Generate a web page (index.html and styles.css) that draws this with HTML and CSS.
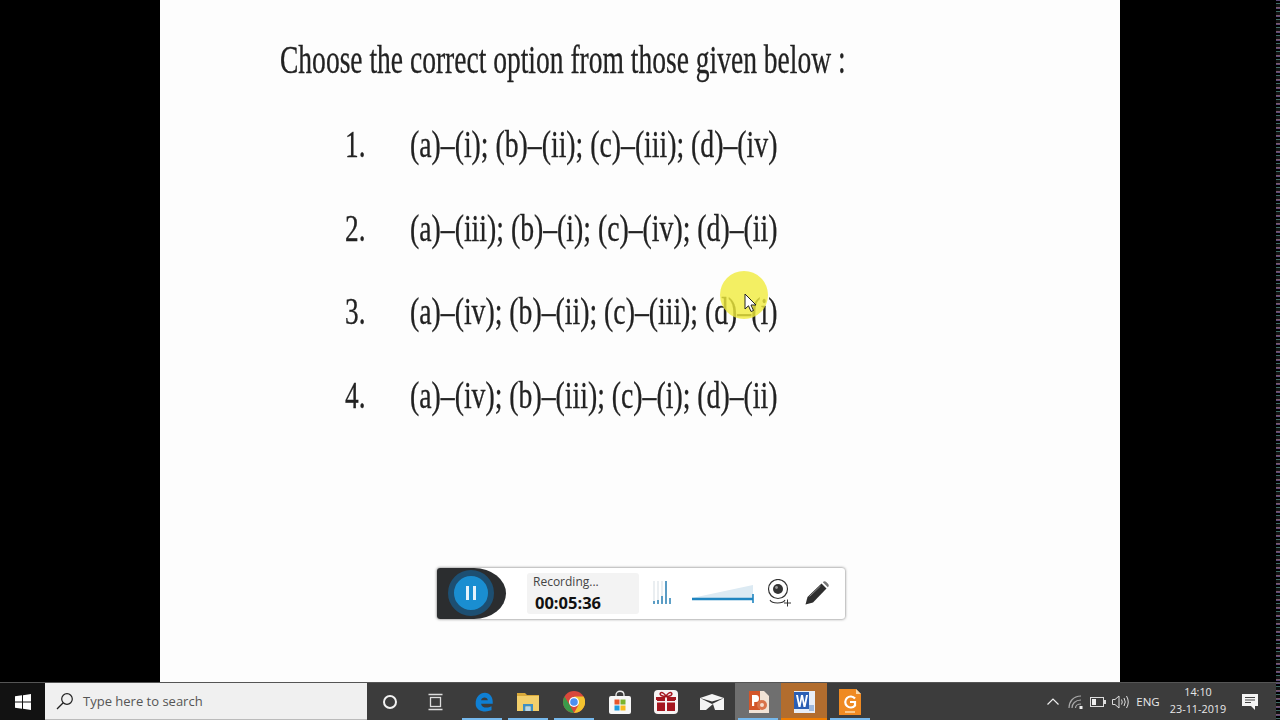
FILE: index.html
```html
<!DOCTYPE html>
<html lang="en">
<head>
    <meta charset="UTF-8">
    <title>Screen recording</title>
    <link rel="stylesheet" href="styles.css">
</head>
<body>

    <!-- Slide on a black desktop -->
    <div class="stage">
        <div class="sheet">
            <div class="question"><span>Choose the correct option from those given below :</span></div>

            <div class="options">
                <div class="option"><span class="num">1.</span><span class="answer">(a)–(i); (b)–(ii); (c)–(iii); (d)–(iv)</span></div>
                <div class="option"><span class="num">2.</span><span class="answer">(a)–(iii); (b)–(i); (c)–(iv); (d)–(ii)</span></div>
                <div class="option"><span class="num">3.</span><span class="answer">(a)–(iv); (b)–(ii); (c)–(iii); (d)–(i)</span></div>
                <div class="option"><span class="num">4.</span><span class="answer">(a)–(iv); (b)–(iii); (c)–(i); (d)–(ii)</span></div>
            </div>

            <!-- Recorder toolbar -->
            <div class="recorder">
                <div class="rec-cap"><div class="rec-pause"><i></i><i></i></div></div>
                <div class="rec-time">
                    <div class="rec-label">Recording...</div>
                    <div class="rec-clock">00:05:36</div>
                </div>
                <svg class="rec-levels" width="18" height="24" viewBox="0 0 18 24">
                    <path d="M1 0v22M5 0v22M9 0v22M13 0v22" stroke="#d5dde3" stroke-width="1"/>
                    <path d="M1 20v3M5 19v4M9 15v8M13 0v23M17 17v6" stroke="#2a80b5" stroke-width="1.5"/>
                </svg>
                <svg class="rec-volume" width="64" height="20" viewBox="0 0 64 20">
                    <path d="M1 14L62 1V14Z" fill="#dceaf3"/>
                    <path d="M1 15H62" stroke="#1f85c0" stroke-width="2.4"/>
                    <path d="M62 10V19" stroke="#1f85c0" stroke-width="1.6"/>
                </svg>
                <svg class="rec-cam" width="24" height="28" viewBox="0 0 24 28">
                    <circle cx="11" cy="10" r="9.5" fill="#fff" stroke="#333" stroke-width="1.2"/>
                    <circle cx="11" cy="10" r="5" fill="#333"/>
                    <circle cx="9.5" cy="8.5" r="1.4" fill="#999"/>
                    <path d="M3 21c2 4 13 4 15 0" fill="none" stroke="#333" stroke-width="1.1"/>
                    <path d="M17 24h7M20.500 20.500v7" stroke="#333" stroke-width="1"/>
                </svg>
                <svg class="rec-pen" width="24" height="24" viewBox="0 0 24 24">
                    <path d="M0.500 23.500L2.500 16L16.500 2.500L21.500 7.500L8 21.500Z" fill="#2e2e2e"/>
                    <path d="M17.800 1.200Q19.500 -0.500 21.500 1.200L23 2.800Q24.500 4.500 22.800 6.200Z" fill="#777"/>
                    <path d="M4.500 15.500L15.500 5" stroke="#888" stroke-width="1"/>
                </svg>
            </div>
        </div>

        <!-- Cursor highlight -->
        <div class="spot"></div>
        <svg class="pointer" width="14" height="20" viewBox="0 0 14 20">
            <path d="M1 1V16L4.500 12.800L7 18.500L9.500 17.500L7 12H12Z" fill="#fff" stroke="#222" stroke-width="1"/>
        </svg>

        <div class="noise"></div>
    </div>

    <!-- Windows taskbar -->
    <div class="taskbar">
        <div class="start">
            <svg width="16" height="16" viewBox="0 0 16 16">
                <path d="M0 2.300L7 1.300V7.500H0ZM8 1.200L16 0V7.500H8ZM0 8.500H7V14.700L0 13.700ZM8 8.500H16V16L8 14.800Z" fill="#fff"/>
            </svg>
        </div>
        <div class="search">
            <svg width="18" height="18" viewBox="0 0 18 18">
                <circle cx="11" cy="7" r="5.300" fill="none" stroke="#222" stroke-width="1.200"/>
                <path d="M7.200 10.800L1 17" stroke="#222" stroke-width="1.300"/>
            </svg>
            <span>Type here to search</span>
        </div>

        <div class="task-btn">
            <svg width="18" height="18" viewBox="0 0 18 18"><circle cx="9" cy="9" r="6" fill="none" stroke="#f2f2f2" stroke-width="2"/></svg>
        </div>
        <div class="task-btn">
            <svg width="18" height="18" viewBox="0 0 18 18" fill="none" stroke="#ddd" stroke-width="1.300">
                <path d="M1.500 1.500H15.500M1.500 16.500H15.500"/>
                <rect x="3.500" y="4.500" width="10" height="9"/>
            </svg>
        </div>
        <div class="task-btn running">
            <svg class="edge" width="20" height="22" viewBox="0 0 24 24">
                <path d="M2 14C2 6 7 1 13 1C19 1 23 6 22.500 14H8.500C9 19 16 20 21 17V22C13 25 2 23 2 14ZM8.500 10H16.500C16.500 5.500 9 5.500 8.500 10Z" fill="#0f7fd3"/>
            </svg>
        </div>
        <div class="task-btn running">
            <svg width="22" height="20" viewBox="0 0 22 20">
                <path d="M0 1H8L10 3H22V5H0Z" fill="#d9a93a"/>
                <rect y="4" width="22" height="15" fill="#f3cf6b"/>
                <path d="M6 19V12H16V19H13.500V14.500H8.500V19Z" fill="#3f8fc4"/>
                <rect x="8.500" y="14.500" width="5" height="4.500" fill="#b8d8ea"/>
            </svg>
        </div>
        <div class="task-btn running">
            <svg width="22" height="22" viewBox="0 0 22 22">
                <circle cx="11" cy="11" r="11" fill="#d9483b"/>
                <path d="M11 22A11 11 0 0 1 1.500 5.500L7 14.500Z" fill="#3a9a4a"/>
                <path d="M11 22A11 11 0 0 0 20.600 5.500H11L15.500 14Z" fill="#f3c32f"/>
                <circle cx="11" cy="11" r="5" fill="#fff"/>
                <circle cx="11" cy="11" r="3.800" fill="#4d8ff0"/>
            </svg>
        </div>
        <div class="task-btn">
            <svg width="22" height="24" viewBox="0 0 22 24">
                <path d="M7 7V5C7 0 15 0 15 5V7" fill="none" stroke="#eee" stroke-width="1.300"/>
                <rect y="6" width="22" height="18" rx="2" fill="#f7f7f7"/>
                <rect x="5.500" y="9.500" width="5" height="5" fill="#e7552c"/>
                <rect x="11.500" y="9.500" width="5" height="5" fill="#7bb42c"/>
                <rect x="5.500" y="15.500" width="5" height="5" fill="#1e9be0"/>
                <rect x="11.500" y="15.500" width="5" height="5" fill="#f8bb1d"/>
            </svg>
        </div>
        <div class="task-btn">
            <svg width="24" height="24" viewBox="0 0 24 24">
                <rect width="24" height="24" rx="4" fill="#f7f3f3"/>
                <rect x="3" y="9" width="18" height="12" fill="#a5161f"/>
                <rect x="2" y="7" width="20" height="3" fill="#a5161f"/>
                <path d="M11 7h2v14h-2zM2 11h20v1.500H2z" fill="#f7f3f3"/>
                <path d="M12 6.500C8 6.500 5 5 6.500 3C8 1.500 11 4 12 6.500C13 4 16 1.500 17.500 3C19 5 16 6.500 12 6.500Z" fill="none" stroke="#a5161f" stroke-width="1.500"/>
            </svg>
        </div>
        <div class="task-btn">
            <svg width="24" height="16" viewBox="0 0 24 16">
                <path d="M0 4L12 0L24 4V16H0Z" fill="#f4f4f4"/>
                <path d="M0 4L12 10L24 4L12 7.500Z" fill="#333"/>
                <path d="M6 16L13 10L15 16Z" fill="#3c3c3c"/>
            </svg>
        </div>
        <div class="task-btn running hover">
            <svg width="24" height="24" viewBox="0 0 24 24">
                <path d="M3 1H18L23 6V23H3Z" fill="#f1e3d6"/>
                <path d="M3 1H14V20H3Z" fill="#d3562a"/>
                <path d="M6 16V5H10Q13 5 13 8.500Q13 12 10 12H8.200V16Z" fill="#fff"/>
                <circle cx="16" cy="15" r="5" fill="#d9734a"/>
                <circle cx="16" cy="15" r="2" fill="#f6dccb"/>
            </svg>
        </div>
        <div class="task-btn running active">
            <svg width="24" height="24" viewBox="0 0 24 24">
                <rect x="2" y="1" width="21" height="22" fill="#e8eef6"/>
                <rect x="2" y="2" width="15" height="17" fill="#2b5fb4"/>
                <path d="M4 5H6L7.500 13L9 5H11L12.500 13L14 5H16L13.500 17H11.500L10 9L8.500 17H6.500Z" fill="#fff"/>
                <rect x="17" y="15" width="5" height="6" fill="#9db8dc"/>
            </svg>
        </div>
        <div class="task-btn running">
            <svg width="24" height="26" viewBox="0 0 24 26">
                <path d="M1 0H18L23 5V26H1Z" fill="#ef8a22"/>
                <path d="M18 0L23 5H18Z" fill="#fbd9aa"/>
                <path d="M17 9.500A5.500 5.500 0 1 0 17 16.500V13H12" fill="none" stroke="#fff" stroke-width="2.200"/>
                <path d="M7 23H17" stroke="#fbd9aa" stroke-width="1.500"/>
            </svg>
        </div>

        <!-- System tray -->
        <div class="tray">
            <div class="tray-item caret">
                <svg width="12" height="7" viewBox="0 0 12 7"><path d="M0.500 6.500L6 1L11.500 6.500" fill="none" stroke="#eee" stroke-width="1.200"/></svg>
            </div>
            <div class="tray-item wifi">
                <svg width="16" height="14" viewBox="0 0 16 14" fill="none" stroke="#aaa" stroke-width="1.200">
                    <path d="M1 13C1 7 5 1 13 1M4 13C4 9 7 5 13 5M7.500 13C7.500 11 9.500 9 13 9"/>
                    <rect x="11.500" y="11" width="3" height="3" fill="#eee" stroke="none"/>
                </svg>
            </div>
            <div class="tray-item battery">
                <svg width="16" height="10" viewBox="0 0 16 10">
                    <rect x="0.500" y="0.500" width="13" height="9" fill="none" stroke="#ddd"/>
                    <rect x="2" y="2" width="4" height="6" fill="#eee"/>
                    <rect x="14" y="3" width="2" height="4" fill="#ddd"/>
                </svg>
            </div>
            <div class="tray-item volume">
                <svg width="17" height="14" viewBox="0 0 17 14" fill="none" stroke="#ddd">
                    <path d="M0.500 4.500H3L7 1V13L3 9.500H0.500Z"/>
                    <path d="M9.500 4.500Q11 7 9.500 9.500M12 3Q14.500 7 12 11M14.500 1Q18 7 14.500 13"/>
                </svg>
            </div>
            <div class="tray-item lang">ENG</div>
            <div class="tray-item clock">
                <div>14:10</div>
                <div>23-11-2019</div>
            </div>
            <div class="tray-item notify">
                <svg width="16" height="16" viewBox="0 0 16 16">
                    <path d="M0 0H16V12H13V16L9 12H0Z" fill="#f4f4f4"/>
                    <path d="M3 3.500H13M3 6H13M3 8.500H9" stroke="#444" stroke-width="1"/>
                </svg>
            </div>
        </div>
    </div>

</body>
</html>
```

FILE: styles.css
```css
/* Basic reset and page layout */
* {
    margin: 0;
    padding: 0;
    box-sizing: border-box;
}

body {
    width: 1280px;
    height: 720px;
    overflow: hidden;
    display: flex;
    flex-direction: column;
    background-color: #000;
    font-family: "Open Sans", Arial, sans-serif;
}

.stage {
    position: relative;
    flex: 1;
    display: flex;
    justify-content: center;
}

.sheet {
    width: 960px;
    background-color: #fdfdfd;
    padding: 37px 0 0 120px;
    display: flex;
    flex-direction: column;
    font-family: "Liberation Serif", "Times New Roman", serif;
    color: #222;
}

/* Question text, squeezed like the stretched slide */
.question {
    height: 46px;
    font-size: 40px;
    line-height: 46px;
    white-space: nowrap;
    -webkit-text-stroke: 0.3px #222;
    filter: blur(0.5px);
}

.question span {
    display: inline-block;
    transform: scaleX(0.688);
    transform-origin: left center;
}

.options {
    margin-top: 39px;
    padding-left: 65px;
    display: flex;
    flex-direction: column;
    gap: 39.500px;
    -webkit-text-stroke: 0.3px #222;
    filter: blur(0.5px);
}

.option {
    height: 44px;
    display: flex;
    font-size: 38px;
    line-height: 44px;
    white-space: nowrap;
}

.num {
    width: 65px;
    display: inline-block;
    transform: scaleX(0.72);
    transform-origin: left center;
}

.answer {
    display: inline-block;
    transform: scaleX(0.73);
    transform-origin: left center;
}

/* Recorder toolbar */
.recorder {
    width: 408px;
    height: 51px;
    margin: 151px 0 0 157px;
    display: flex;
    align-items: center;
    background-color: #fff;
    border-radius: 3px;
    box-shadow: 0 0 3px rgba(0, 0, 0, 0.6);
    overflow: hidden;
    font-family: "Open Sans", Arial, sans-serif;
}

.rec-cap {
    width: 69px;
    height: 51px;
    display: flex;
    align-items: center;
    padding-left: 11px;
    background-color: #2b2d2f;
    border-radius: 0 32px 32px 0 / 0 50% 50% 0;
}

.rec-pause {
    width: 46px;
    height: 46px;
    display: flex;
    align-items: center;
    justify-content: center;
    gap: 4px;
    background-color: #1a8ed1;
    border: 6px solid #1d4f72;
    border-radius: 50%;
}

.rec-pause i {
    width: 3px;
    height: 14px;
    background-color: #e6f3fb;
}

.rec-time {
    width: 112px;
    height: 41px;
    margin-left: 21px;
    padding: 1px 0 0 6px;
    background-color: #f3f3f3;
    border-radius: 3px;
}

.rec-label {
    font-size: 12px;
    line-height: 16px;
    color: #444;
}

.rec-clock {
    margin-top: 3px;
    padding-left: 2px;
    font-size: 16.500px;
    line-height: 20px;
    font-weight: 700;
    color: #111;
}

.rec-levels {
    margin-left: 14px;
}

.rec-volume {
    margin-left: 20px;
    margin-top: 2px;
}

.rec-cam {
    margin-left: 12px;
}

.rec-pen {
    margin-left: 14px;
}

/* Cursor highlight */
.spot {
    position: absolute;
    left: 720px;
    top: 271px;
    width: 48px;
    height: 48px;
    border-radius: 50%;
    background-color: rgba(240, 235, 60, 0.8);
}

.pointer {
    position: absolute;
    left: 744px;
    top: 293px;
}

/* Noisy strip at the right edge of the recording */
.noise,
.taskbar::after {
    position: absolute;
    top: 0;
    right: 0;
    bottom: 0;
    width: 4px;
    background:
        repeating-linear-gradient(180deg, #5a4a7a 0 1px, #000 1px 3px, #3f6d66 3px 4px, #111 4px 7px, #7a5a6a 7px 8px),
        #000;
}

/* Taskbar */
.taskbar {
    position: relative;
    height: 38px;
    flex-shrink: 0;
    display: flex;
    background-color: #3c3c3c;
    border-top: 1px solid #555;
}

.taskbar::after {
    content: "";
}

.start {
    width: 45px;
    display: flex;
    align-items: center;
    justify-content: center;
    background-color: #121212;
}

.search {
    width: 322px;
    display: flex;
    align-items: center;
    gap: 9px;
    padding-left: 11px;
    background-color: #f0f0f0;
    border-bottom: 1px solid #bbb;
    font-size: 13px;
    color: #555;
}

.task-btn {
    position: relative;
    width: 46px;
    display: flex;
    align-items: center;
    justify-content: center;
}

.task-btn.running::after {
    content: "";
    position: absolute;
    left: 3px;
    right: 3px;
    bottom: 0;
    height: 2px;
    background-color: #76b9ed;
}

.task-btn.hover {
    background-color: #6f6f6f;
}

.task-btn.active {
    background-color: #b26d2e;
}

.task-btn.active::after {
    left: 0;
    right: 0;
    background-color: #f07d00;
}

.edge {
    margin-left: 3px;
}

/* System tray */
.tray {
    margin-left: auto;
    padding-right: 11px;
    display: flex;
    color: #e8e8e8;
}

.tray-item {
    display: flex;
    align-items: center;
    justify-content: center;
}

.caret {
    width: 24px;
}

.wifi,
.battery,
.volume {
    width: 22px;
}

.lang {
    width: 34px;
    font-size: 11.500px;
}

.clock {
    width: 66px;
    padding-bottom: 4px;
    flex-direction: column;
    font-size: 10.800px;
    line-height: 17px;
}

.notify {
    width: 38px;
}
```
